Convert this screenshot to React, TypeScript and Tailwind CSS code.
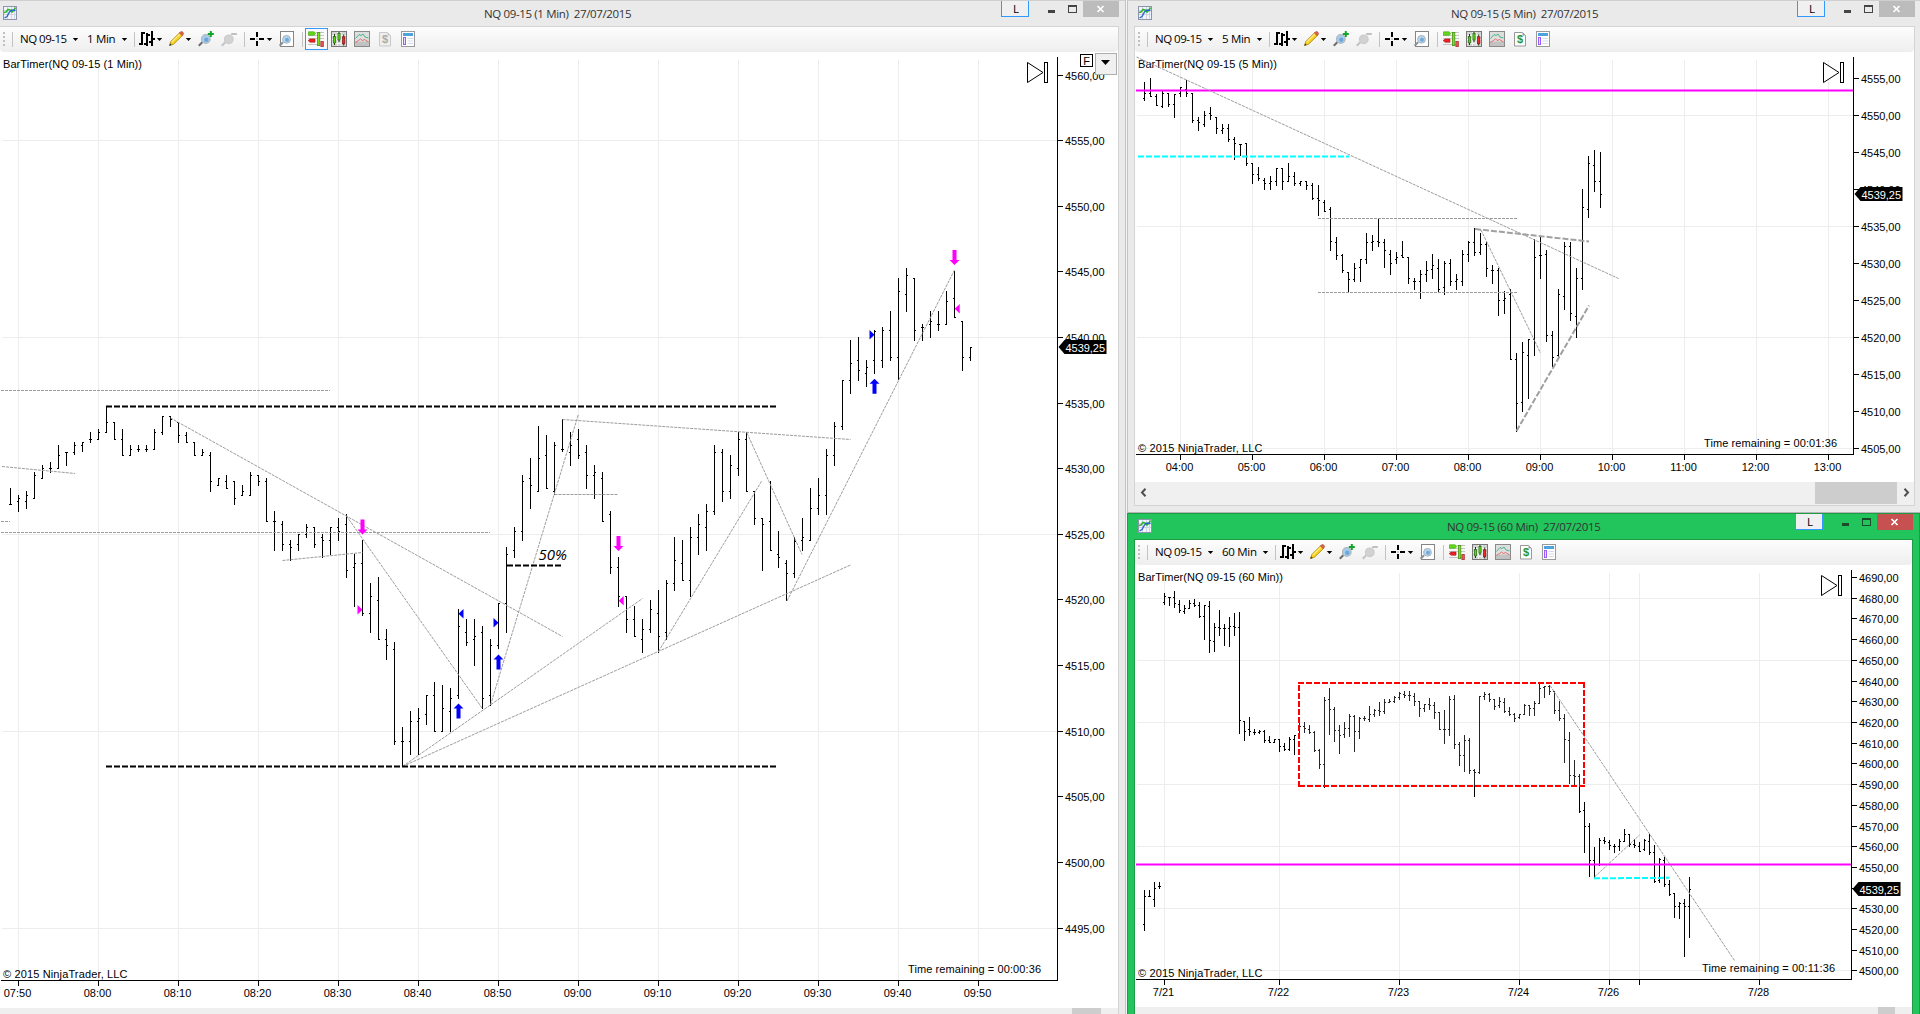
import React from "react";

type Bar = [number, number, number, number];

interface Segment {
  x: number;
  top: number;
  step: number;
  bars: Bar[];
}

/* Bars are [high, low, open, close]; offsets below the segment's top in thirds of a pixel. */
const oneMin: Segment[] = [
  {
    x: 10,
    top: 360,
    step: 8,
    bars: [
      [384, 433, 433, 433], [405, 455, 424, 415], [393, 446, 424, 406], [337, 415, 415, 346],
      [315, 355, 355, 325], [306, 338, 325, 325], [255, 325, 325, 286], [277, 317, 277, 277],
      [246, 286, 277, 256], [247, 277, 256, 247], [216, 248, 238, 238], [207, 238, 238, 217],
      [138, 217, 217, 187], [187, 238, 187, 238], [207, 286, 238, 286], [256, 286, 286, 268],
      [256, 277, 268, 268], [256, 277, 268, 268], [207, 268, 268, 217], [169, 226, 217, 169],
      [169, 200, 169, 178], [187, 248, 187, 226], [216, 248, 226, 247], [247, 286, 247, 286],
      [267, 286, 286, 277], [277, 395, 286, 364], [355, 377, 377, 355], [346, 385, 364, 385],
      [364, 434, 364, 415], [376, 406, 406, 394], [337, 406, 406, 346], [346, 377, 346, 364],
      [355, 484, 364, 484], [453, 572, 484, 484], [484, 572, 493, 553], [541, 602, 553, 562],
      [523, 572, 553, 523], [492, 533, 523, 502], [502, 563, 502, 553], [523, 593, 532, 541],
      [502, 584, 541, 502], [474, 543, 502, 514], [462, 654, 493, 631], [583, 740, 622, 610],
      [541, 769, 610, 760], [669, 818, 760, 709], [652, 838, 721, 838], [807, 900, 838, 856],
      [847, 1154, 868, 1144], [1101, 1222, 1144, 1144], [1053, 1185, 1144, 1084], [1045, 1185, 1084, 1075],
    ],
  },
  {
    x: 426,
    top: 380,
    step: 8,
    bars: [
      [945, 1034, 1003, 945], [906, 1055, 945, 1054], [915, 1055, 1054, 985], [924, 1055, 994, 955],
      [687, 957, 946, 738], [717, 797, 757, 787], [717, 857, 778, 769], [738, 986, 757, 955],
      [777, 977, 946, 796], [670, 808, 796, 670], [501, 759, 670, 523], [441, 533, 512, 454],
      [286, 483, 454, 303], [234, 386, 295, 316], [138, 335, 334, 235], [165, 326, 226, 325],
      [186, 346, 334, 196], [117, 217, 208, 208], [156, 257, 217, 196], [148, 237, 178, 226],
      [196, 326, 217, 286], [255, 356, 286, 277], [277, 425, 295, 424], [393, 581, 403, 562],
      [531, 680, 562, 649], [649, 759, 649, 718], [678, 770, 718, 769], [717, 819, 778, 748],
      [660, 758, 748, 688], [630, 818, 700, 769], [600, 780, 757, 610], [471, 632, 610, 541],
      [480, 602, 550, 601], [441, 652, 601, 472], [402, 524, 472, 433], [372, 513, 442, 394],
      [195, 404, 394, 217], [207, 365, 217, 334], [225, 356, 334, 256], [156, 287, 265, 178],
      [156, 335, 178, 334], [334, 435, 334, 415], [415, 572, 415, 433], [303, 512, 424, 511],
      [453, 563, 523, 532], [541, 662, 550, 580], [471, 594, 580, 484],
    ],
  },
  {
    x: 802,
    top: 240,
    step: 8,
    bars: [
      [834, 934, 901, 892], [744, 902, 901, 805], [714, 824, 805, 766], [627, 824, 766, 646],
      [546, 678, 646, 559], [420, 570, 559, 421], [300, 461, 421, 370], [291, 423, 361, 391],
      [360, 441, 400, 382], [270, 402, 361, 273], [261, 383, 361, 271], [213, 363, 271, 352],
      [114, 420, 352, 154], [84, 216, 163, 106], [114, 302, 115, 271], [252, 303, 262, 262],
      [213, 294, 253, 244], [213, 273, 253, 253], [153, 254, 253, 184], [93, 234, 175, 232],
      [243, 393, 244, 352], [321, 363, 352, 322],
    ],
  },
];

const fiveMin: Segment[] = [
  {
    x: 1144,
    top: 60,
    step: 6,
    bars: [
      [66, 122, 115, 101], [54, 110, 101, 108], [102, 139, 108, 137], [92, 144, 139, 101],
      [101, 140, 101, 133], [102, 174, 133, 102], [80, 110, 100, 83], [60, 110, 89, 100],
      [100, 188, 100, 182], [171, 212, 182, 188], [153, 200, 193, 166], [141, 180, 160, 166],
      [171, 221, 172, 205], [192, 221, 211, 205], [192, 246, 205, 238], [231, 299, 238, 250],
      [252, 289, 253, 253], [250, 318, 250, 310], [309, 371, 310, 343], [321, 364, 343, 355],
      [354, 389, 361, 370], [348, 389, 370, 364], [324, 377, 364, 325], [325, 389, 325, 364],
      [309, 365, 364, 349], [336, 377, 349, 370], [362, 377, 370, 364], [364, 389, 364, 376],
      [370, 420, 376, 415], [375, 467, 415, 421], [420, 455, 427, 454], [441, 572, 448, 544],
      [532, 600, 547, 586], [583, 638, 586, 632], [636, 696, 637, 658], [609, 665, 658, 625],
      [598, 665, 622, 598], [519, 612, 598, 547], [525, 572, 547, 544], [475, 560, 544, 547],
      [537, 624, 547, 571], [571, 644, 583, 610], [576, 611, 598, 592], [543, 594, 586, 592],
      [592, 671, 592, 656], [655, 690, 664, 664], [630, 716, 664, 643], [603, 665, 643, 631],
      [582, 656, 628, 616], [598, 695, 625, 688], [603, 704, 682, 610], [597, 678, 610, 664],
      [642, 690, 664, 658], [570, 678, 664, 583], [543, 606, 583, 547], [505, 587, 547, 577],
      [519, 585, 577, 553], [547, 651, 553, 625], [615, 672, 631, 631], [624, 767, 631, 721],
      [693, 762, 721, 714], [687, 900, 703, 898], [879, 1115, 898, 1030], [846, 1056, 1027, 877],
      [838, 1016, 886, 838], [537, 887, 838, 592], [531, 657, 586, 586], [570, 846, 583, 826],
      [813, 920, 826, 892], [687, 893, 886, 703], [546, 749, 709, 559], [546, 783, 559, 760],
      [624, 833, 769, 655], [387, 689, 655, 442], [288, 474, 448, 310], [270, 396, 316, 364],
      [276, 444, 364, 403],
    ],
  },
];

const sixtyMin: Segment[] = [
  {
    x: 1144,
    top: 500,
    step: 5,
    bars: [
      [1170, 1292, 1273, 1189], [1170, 1190, 1189, 1189], [1146, 1221, 1198, 1164], [1146, 1166, 1158, 1160],
      [279, 315, 307, 289], [291, 318, 291, 291], [272, 324, 291, 310], [300, 339, 312, 331],
      [315, 342, 334, 325], [300, 326, 325, 310], [297, 320, 310, 316], [306, 353, 316, 349],
      [315, 420, 349, 316], [303, 459, 318, 420], [369, 456, 423, 382], [330, 407, 382, 384],
      [372, 438, 384, 384], [350, 441, 384, 379], [339, 407, 379, 382], [336, 702, 382, 661],
      [662, 723, 664, 694], [651, 708, 688, 694], [687, 704, 697, 697], [690, 703, 697, 694],
      [690, 728, 694, 721], [708, 728, 721, 727], [717, 728, 727, 718], [717, 755, 718, 739],
      [730, 752, 739, 748], [711, 753, 748, 718], [705, 764, 718, 706], [669, 706, 706, 679],
      [666, 698, 679, 685], [675, 702, 688, 697], [694, 755, 697, 751], [747, 807, 751, 793],
      [591, 863, 793, 600], [564, 704, 598, 628], [621, 726, 628, 691], [675, 761, 691, 706],
      [666, 714, 703, 685], [642, 711, 685, 649], [645, 756, 649, 694], [651, 716, 694, 655],
      [649, 662, 655, 655], [618, 666, 658, 643], [627, 650, 643, 631], [606, 647, 631, 634],
      [597, 642, 634, 607], [597, 609, 606, 604], [588, 608, 604, 592], [576, 599, 592, 580],
      [574, 594, 583, 586], [573, 602, 586, 586], [579, 617, 588, 604], [603, 651, 604, 625],
      [612, 636, 625, 613], [594, 630, 613, 616], [606, 656, 616, 637], [636, 690, 637, 688],
      [630, 731, 688, 688], [588, 708, 688, 598], [585, 747, 598, 733], [727, 797, 733, 766],
      [705, 815, 766, 721], [714, 822, 721, 811], [807, 890, 811, 818], [588, 822, 818, 589],
      [576, 599, 589, 583], [579, 606, 583, 598], [597, 630, 598, 619], [591, 623, 616, 604],
      [594, 638, 607, 634], [621, 648, 634, 643], [639, 665, 643, 655], [643, 657, 652, 643],
      [612, 645, 643, 616], [615, 648, 616, 625], [603, 647, 625, 610], [549, 612, 610, 565],
      [558, 593, 562, 559], [554, 584, 559, 574], [573, 641, 574, 631], [603, 662, 631, 655],
      [642, 788, 655, 718], [696, 852, 721, 826], [780, 855, 826, 829], [822, 938, 829, 934],
      [906, 1058, 931, 979], [969, 1131, 979, 1081], [1041, 1134, 1081, 1093], [1014, 1098, 1093, 1021],
      [1011, 1031, 1021, 1024], [1020, 1050, 1027, 1036], [1032, 1058, 1039, 1039], [1017, 1053, 1039, 1024],
      [987, 1026, 1024, 1003], [1002, 1041, 1003, 1033], [1018, 1044, 1033, 1036], [1027, 1055, 1039, 1054],
      [1017, 1053, 1048, 1021], [1002, 1065, 1024, 1057], [1036, 1148, 1057, 1144], [1073, 1148, 1141, 1078],
      [1071, 1161, 1081, 1154], [1140, 1188, 1153, 1183], [1179, 1253, 1180, 1220], [1206, 1257, 1219, 1210],
      [1197, 1371, 1210, 1219], [1131, 1314, 1219, 1168],
    ],
  },
];

function barsPath(segments: Segment[]) {
  let d = "";
  for (const s of segments) {
    s.bars.forEach(([h, l, o, c], i) => {
      const x = s.x + i * s.step;
      const oy = Math.floor(o / 3);
      const cy = Math.floor(c / 3);
      const y1 = Math.min(Math.round(h / 3), oy, cy) + s.top;
      const y2 = Math.max(Math.round(l / 3), oy + 1, cy + 1) + s.top;
      d += `M${x} ${y1}h1V${y2}h-1z`;
      d += `M${x - 1} ${oy + s.top}h1v1h-1z`;
      d += `M${x + 1} ${cy + s.top}h1v1h-1z`;
    });
  }
  return d;
}

function OhlcBars({ segments }: { segments: Segment[] }) {
  return <path d={barsPath(segments)} fill="#000" shapeRendering="crispEdges" />;
}

const arial = "'Liberation Sans', Arial, sans-serif";
const segoe = "'Open Sans', 'Noto Sans', sans-serif";

interface FrameProps {
  left: number;
  axisX: number;
  top: number;
  axisY: number;
  prices: { label: string; y: number; grid: boolean }[];
  times: { label: string; x: number }[];
  timeBase: number;
  title: string;
  titleWidth: number;
  copyrightBase: number;
}

function Frame(p: FrameProps) {
  return (
    <>
      <g fill="#ededed" shapeRendering="crispEdges">
        {p.times.map((t) => (
          <rect key={t.x} x={t.x} y={p.top + 3} width={1} height={p.axisY - p.top - 3} />
        ))}
        {p.prices
          .filter((q) => q.grid)
          .map((q) => (
            <rect key={q.y} x={p.left + 1} y={q.y} width={p.axisX - p.left - 1} height={1} />
          ))}
      </g>
      <g fill="#000" shapeRendering="crispEdges">
        <rect x={p.axisX} y={p.top} width={1} height={p.axisY - p.top + 1} />
        <rect x={p.left} y={p.axisY} width={p.axisX - p.left} height={1} />
        {p.times.map((t) => (
          <rect key={t.x} x={t.x} y={p.axisY + 1} width={1} height={5} />
        ))}
        {p.prices.map((q) => (
          <rect key={q.y} x={p.axisX + 1} y={q.y} width={5} height={1} />
        ))}
      </g>
      <g fontFamily={arial} fontSize={11} fill="#000">
        {p.times.map((t) => (
          <text key={t.x} x={t.x - 0.5} y={p.timeBase} textAnchor="middle">
            {t.label}
          </text>
        ))}
        {p.prices.map((q) => (
          <text key={q.y} x={p.axisX + 8} y={q.y + 4.5} textLength={39.5}>
            {q.label}
          </text>
        ))}
        <text x={p.left + 2} y={p.top + 11} textLength={p.titleWidth}>
          {p.title}
        </text>
        <text x={p.left + 2} y={p.copyrightBase} textLength={124.5}>
          © 2015 NinjaTrader, LLC
        </text>
      </g>
      <g fill="#fff" stroke="#000">
        <path d={`M${p.axisX - 29.5} ${p.top + 5.5}v20l15.5-10z`} />
        <rect x={p.axisX - 12.5} y={p.top + 5.5} width={3} height={20} />
      </g>
    </>
  );
}

function Remaining({ x, y, value }: { x: number; y: number; value: string }) {
  return (
    <text x={x} y={y} textLength={133} fontFamily={arial} fontSize={11}>
      Time remaining = {value}
    </text>
  );
}

function LastPrice({ x, y }: { x: number; y: number }) {
  return (
    <g>
      <path d={`M${x + 1.5} ${y}l6-7h42v14h-42z`} fill="#000" />
      <text x={x + 8.5} y={y + 4.5} fill="#fff" fontFamily={arial} fontSize={11} textLength={39.5}>
        4539,25
      </text>
    </g>
  );
}

type Line = [number, number, number, number];

function ThinLines({ lines }: { lines: Line[] }) {
  return (
    <g stroke="#9c9c9c" strokeWidth={1} strokeDasharray="3 1">
      {lines.map(([x1, y1, x2, y2], i) => (
        <line key={i} x1={x1} y1={y1} x2={x2} y2={y2} />
      ))}
    </g>
  );
}

function ThickLines({ lines, color }: { lines: Line[]; color: string }) {
  return (
    <g stroke={color} strokeWidth={2} strokeDasharray="6 2">
      {lines.map(([x1, y1, x2, y2], i) => (
        <line key={i} x1={x1} y1={y1} x2={x2} y2={y2} />
      ))}
    </g>
  );
}

const range = (n: number) => Array.from({ length: n }, (_, i) => i);
const price = (n: number) => `${n},00`;

function OneMinuteChart() {
  const down = (x: number, y: number) => `M${x - 2} ${y}h4v10h3l-5 5l-5-5h3z`;
  const up = (x: number, y: number) => `M${x - 2} ${y + 15}h4v-10h3l-5-5l-5 5h3z`;
  return (
    <svg className="block shrink-0" width={1118} height={956} viewBox="0 52 1118 956">
      <Frame
        left={1}
        axisX={1057}
        top={57}
        axisY={980}
        prices={range(14).map((i) => ({
          label: price(4560 - i * 5),
          y: Math.floor(75 + 65.62 * i),
          grid: i % 3 === 1,
        }))}
        times={range(13).map((i) => {
          const m = 470 + i * 10;
          return {
            x: 18 + 80 * i,
            label: `${String(Math.floor(m / 60)).padStart(2, "0")}:${String(m % 60).padStart(2, "0")}`,
          };
        })}
        timeBase={997}
        title="BarTimer(NQ 09-15 (1 Min))"
        titleWidth={139}
        copyrightBase={978}
      />
      <OhlcBars segments={oneMin} />
      <ThinLines
        lines={[
          [1, 390.5, 330, 390.5],
          [1, 532.5, 490, 532.5],
          [1, 521.5, 10, 521.5],
          [2, 466.5, 75, 473.5],
          [170.5, 418, 562.5, 636.5],
          [346.5, 516, 482, 708],
          [282.5, 560.5, 362.5, 552.5],
          [490.5, 705, 578.5, 414],
          [402.5, 766.5, 642.5, 598.5],
          [402.5, 766.5, 850.5, 565],
          [554.5, 494.5, 618, 494.5],
          [562.5, 419.5, 850.5, 439.5],
          [658.5, 651.5, 762, 480.5],
          [747, 433, 802, 554.5],
          [787, 601, 954.5, 270],
        ]}
      />
      <ThickLines
        color="#000"
        lines={[
          [106, 406.5, 777, 406.5],
          [106, 766.5, 777, 766.5],
          [507, 565.5, 561, 565.5],
        ]}
      />
      <text x={538.5} y={559.5} fontFamily={segoe} fontStyle="italic" fontSize={15}>
        50%
      </text>
      <path d={down(362.5, 519.5) + down(618.5, 536) + down(954.5, 250)} fill="#f0f" />
      <path d={up(458.5, 703.5) + up(498.5, 654.5) + up(874.5, 378.7)} fill="#00f" />
      <path
        d="M357.5 605l5 4.7l-5 4.7z M623.7 596l-5 4.7l5 4.7z M959.7 304l-5 4.7l5 4.7z"
        fill="#f0f"
      />
      <path
        d="M463.5 609l-5 4.7l5 4.7z M493.5 618l5 4.7l-5 4.7z M869.5 330l5 4.7l-5 4.7z"
        fill="#00f"
      />
      <Remaining x={908} y={973} value="00:00:36" />
      <LastPrice x={1057} y={347} />
      <rect x={1080.5} y={54.5} width={12} height={12} fill="#fff" stroke="#000" />
      <text x={1083.3} y={64.5} fontFamily={arial} fontSize={11}>
        F
      </text>
      <rect x={1095.5} y={53.5} width={21} height={21} fill="#f0f0f0" stroke="#adadad" />
      <path d="M1101 60h9l-4.5 5z" fill="#000" />
    </svg>
  );
}

function FiveMinuteChart() {
  return (
    <svg className="block shrink-0" width={779} height={430} viewBox="1135 52 779 430">
      <Frame
        left={1136}
        axisX={1853}
        top={57}
        axisY={454}
        prices={range(11).map((i) => ({ label: price(4555 - i * 5), y: 78 + 37 * i, grid: i % 3 === 1 }))}
        times={range(10).map((i) => ({ x: 1180 + 72 * i, label: `${String(4 + i).padStart(2, "0")}:00` }))}
        timeBase={470.5}
        title="BarTimer(NQ 09-15 (5 Min))"
        titleWidth={139}
        copyrightBase={451.5}
      />
      <OhlcBars segments={fiveMin} />
      <line x1={1136} x2={1853} y1={90.5} y2={90.5} stroke="#f0f" strokeWidth={2} />
      <ThickLines color="#0ff" lines={[[1138, 156.5, 1349, 156.5]]} />
      <ThinLines
        lines={[
          [1136.5, 57, 1618.5, 278.5],
          [1318, 218.5, 1517, 218.5],
          [1318, 292.5, 1517, 292.5],
          [1481, 230, 1540.5, 353],
        ]}
      />
      <ThickLines
        color="#a0a0a0"
        lines={[
          [1475, 229, 1589, 241.5],
          [1516.5, 431, 1589, 305.5],
        ]}
      />
      <Remaining x={1704} y={446.5} value="00:01:36" />
      <LastPrice x={1853} y={194} />
    </svg>
  );
}

function SixtyMinuteChart() {
  const xs = [1164, 1279, 1399, 1519, 1609, 1639, 1759];
  const labels = ["7/21", "7/22", "7/23", "7/24", "7/26", "", "7/28"];
  return (
    <svg className="block shrink-0" width={777} height={442} viewBox="1135 565 777 442">
      <Frame
        left={1136}
        axisX={1851}
        top={570}
        axisY={979}
        prices={range(20).map((i) => ({
          label: price(4690 - i * 10),
          y: Math.floor(577.5 + 20.71 * i),
          grid: i % 3 === 1,
        }))}
        times={xs.map((x, i) => ({ x, label: labels[i] }))}
        timeBase={996}
        title="BarTimer(NQ 09-15 (60 Min))"
        titleWidth={145}
        copyrightBase={977}
      />
      <OhlcBars segments={sixtyMin} />
      <line x1={1136} x2={1851} y1={864.5} y2={864.5} stroke="#f0f" strokeWidth={2} />
      <ThickLines color="#0ff" lines={[[1594, 878.3, 1669.5, 877.8]]} />
      <rect x={1299} y={683} width={285} height={103} fill="#fff" fillOpacity={0.15} />
      <ThickLines
        color="#f00"
        lines={[
          [1298, 683, 1585, 683],
          [1584, 682, 1584, 787],
          [1585, 786, 1298, 786],
          [1299, 787, 1299, 682],
        ]}
      />
      <ThinLines
        lines={[
          [1550, 685.5, 1734.5, 960.5],
          [1594.5, 877, 1639.5, 835],
        ]}
      />
      <Remaining x={1702} y={972} value="00:11:36" />
      <LastPrice x={1851} y={889} />
    </svg>
  );
}

/* ---------- toolbar icons ---------- */

function AppIcon() {
  return (
    <svg className="block" width={14} height={14} viewBox="0 0 14 14">
      <rect x={0.5} y={0.5} width={13} height={13} fill="#f2f6fc" stroke="#8f94ad" />
      <path d="M1 4.5h12M1 8.5h12M4.5 1v12M8.5 1v12M11.5 1v12" stroke="#cdd4e6" />
      <path d="M1 6.5l2-.5 2-2.5 2 .5 2 2 2-2 1.5-2.5" fill="none" stroke="#2eb82e" strokeWidth={1.6} />
      <path d="M1.5 12l2.5-1.5L6.5 6 9 4l3.5.5" fill="none" stroke="#2d62c8" strokeWidth={1.4} />
    </svg>
  );
}

function Caret({ className = "" }: { className?: string }) {
  return (
    <svg className={`block shrink-0 ${className}`} width={7} height={16} viewBox="0 0 7 16">
      <path d="M.8 7h5.4L3.5 10z" fill="#000" />
    </svg>
  );
}

function Separator({ className }: { className: string }) {
  return <div className={`h-[15px] w-px shrink-0 bg-[#c3c3c3] ${className}`} />;
}

function BarStyleIcon() {
  return (
    <svg className="ml-1 block shrink-0" width={16} height={16} viewBox="0 0 16 16">
      <path
        d="M0 12h2v2H0z M2 1h2v13H2z M4 1h2v2H4z M7 2h2v13H7z M5 12h2v2H5z M9 3h2v2H9z M12 0h2v15h-2z M10 10h2v2h-2z M14 7h2v2h-2z"
        fill="#000"
        shapeRendering="crispEdges"
      />
    </svg>
  );
}

function PencilIcon() {
  return (
    <svg className="ml-1.5 block shrink-0" width={16} height={16} viewBox="0 0 16 16">
      <path d="M.5 14.5l1.3-4L10.6 1.700l2.900 2.900-9 8.600z" fill="#f8d01e" stroke="#a98412" strokeWidth={0.8} />
      <path d="M2.800 11.200l8-8" stroke="#fff08a" strokeWidth={1.200} />
      <path d="M10.400 2l1.200-1.200q1.500-.6 2.400.5t.3 2.200l-1.200 1.200z" fill="#e2604e" stroke="#a84b3c" strokeWidth={0.6} />
      <path d="M.3 14.800l.8-2.400 1.600 1.600z" fill="#333" />
    </svg>
  );
}

function ZoomIcon({ plus }: { plus: boolean }) {
  return plus ? (
    <svg className="ml-1.5 block shrink-0" width={16} height={16} viewBox="0 0 16 16">
      <path d="M.8 14.800L4.500 11" stroke="#6e6e6e" strokeWidth={2} />
      <circle cx={7.800} cy={8} r={4.300} fill="#a5cdec" stroke="#b0b8bf" strokeWidth={1.200} />
      <circle cx={8.300} cy={8.800} r={2.200} fill="#6da6da" />
      <path d="M12.800 0v6M9.800 3h6" stroke="#12a52c" strokeWidth={2} />
    </svg>
  ) : (
    <svg className="ml-[7px] block shrink-0" width={16} height={16} viewBox="0 0 16 16">
      <path d="M.8 14.800L4.500 11" stroke="#c4c4c4" strokeWidth={2} />
      <circle cx={7.800} cy={8.300} r={4.300} fill="#d2d2d2" stroke="#cbcbcb" strokeWidth={1.200} />
      <path d="M10.200 3h5.600" stroke="#b9b9b9" strokeWidth={1.800} />
    </svg>
  );
}

function CrosshairIcon() {
  return (
    <svg className="ml-[5px] block shrink-0" width={15} height={16} viewBox="0 0 15 16">
      <path d="M6 1h2v5h-2zM6 10h2v5h-2zM0 7h5v2h-5zM9 7h5v2h-5z" fill="#000" shapeRendering="crispEdges" />
      <rect x={6.500} y={7.500} width={1} height={1} fill="#555" />
    </svg>
  );
}

function DataBoxIcon() {
  return (
    <svg className="ml-1.5 block shrink-0" width={16} height={16} viewBox="0 0 16 16">
      <rect x={1.500} y={0.500} width={13} height={15} fill="#fff" stroke="#858585" />
      <path d="M.6 14.800L4 11.300" stroke="#8a8f94" strokeWidth={2} />
      <circle cx={7.500} cy={8.300} r={3.900} fill="#b5d6f0" stroke="#a9b3bb" />
      <circle cx={8} cy={8.800} r={2} fill="#6fa8dc" />
    </svg>
  );
}

function TraderIcon({ active }: { active: boolean }) {
  return (
    <div
      className={`ml-0.5 flex h-[22px] w-[23px] shrink-0 items-center border pl-[2px] ${
        active ? "border-[#3399ff] bg-[#fafafa]" : "border-transparent"
      }`}
    >
      <svg className="block" width={16} height={16} viewBox="0 0 16 16">
        <path d="M0 4.500h16M0 7.500h16M0 13.500h16M8 1.500h8" stroke="#c4c4c4" />
        <path d="M.5.8h5.500l1.800 1.700-1.800 1.700h-5.500z" fill="#62dc12" stroke="#3f9a12" strokeWidth={0.6} />
        <path d="M7 8h-5l-1.800 1.600 1.800 1.600h5z" fill="#ee2222" stroke="#a31515" strokeWidth={0.6} />
        <rect x={9.400} y={1.400} width={2.400} height={13.200} fill="#7be01a" stroke="#47941a" strokeWidth={0.8} />
        <rect x={12.900} y={10.400} width={2.400} height={5.200} fill="#ee5a5a" stroke="#a33" strokeWidth={0.8} />
      </svg>
    </div>
  );
}

function IndicatorIcon() {
  return (
    <svg className="ml-[3px] block shrink-0" width={16} height={16} viewBox="0 0 16 16">
      <rect x={0.500} y={0.500} width={15} height={15} fill="#d4d4d4" stroke="#777" />
      <path d="M1 4.500h14M1 8.500h14M1 12.500h14M6.500 1v14M10 1v14" stroke="#f3f3f3" />
      <path d="M3.500 3v11M8 1v10M12.700 3.500v11" stroke="#1c3a12" strokeWidth={1} />
      <rect x={2.400} y={5.500} width={2.200} height={6.500} fill="#59d618" stroke="#276a12" strokeWidth={0.700} />
      <rect x={6.900} y={2.500} width={2.200} height={6.500} fill="#59d618" stroke="#276a12" strokeWidth={0.700} />
      <rect x={11.500} y={5.800} width={2.400} height={7} fill="#ee2828" stroke="#7d1717" strokeWidth={0.700} />
    </svg>
  );
}

function StrategyIcon() {
  return (
    <svg className="ml-[7px] block shrink-0" width={16} height={16} viewBox="0 0 16 16">
      <rect x={0.500} y={0.500} width={15} height={15} fill="#dedede" stroke="#8a8a8a" />
      <path d="M1 10.500h14v4.500h-14z" fill="#c2c2c2" />
      <path d="M1.500 7.500L5 3.500l2 1 2-1.500 2 3 3.500 1" fill="none" stroke="#49b78a" />
      <path d="M1.500 11.500l3-2 2-1.500 2 1.500 2-1 4 2.500" fill="none" stroke="#e56a6a" />
    </svg>
  );
}

function AccountIcon({ active }: { active: boolean }) {
  return (
    <svg className="ml-[7px] block shrink-0" width={16} height={16} viewBox="0 0 16 16">
      <path
        d="M2.500 1.500h8l3 3v10.500h-11z"
        fill={active ? "#fff" : "#eee"}
        stroke={active ? "#999" : "#c9c9c9"}
      />
      <path d="M10.500 1.500v3h3z" fill={active ? "#999" : "#c9c9c9"} />
      <text
        x={8}
        y={12.300}
        textAnchor="middle"
        fontFamily={arial}
        fontWeight="bold"
        fontSize={11}
        fill={active ? "#2d9428" : "#ababab"}
      >
        $
      </text>
    </svg>
  );
}

function PropertiesIcon() {
  return (
    <svg className="ml-[7px] block shrink-0" width={16} height={16} viewBox="0 0 16 16">
      <rect x={1.500} y={0.500} width={13} height={15} fill="#fff" stroke="#9a9a9a" />
      <rect x={3} y={2} width={10} height={3} fill="#4fa3dc" />
      <rect x={3.500} y={6.500} width={2} height={7} fill="#e9dcff" stroke="#9b5cff" />
      <path d="M7.500 7.500h5.500M7.500 10h5.500M7.500 12.500h5.500" stroke="#d5dbe6" />
    </svg>
  );
}

function Toolbar({ interval, wide = false, first = false }: { interval: string; wide?: boolean; first?: boolean }) {
  return (
    <div className="flex h-[25px] w-full shrink-0 items-center rounded-bl-sm rounded-br-sm bg-linear-to-b from-[#fdfdfd] to-[#eeeeee] pb-px font-['Open_Sans','Noto_Sans',sans-serif] text-[11.5px] leading-4 text-black">
      <div className="ml-[3px] flex shrink-0 flex-col gap-[2px]">
        {range(4).map((i) => (
          <div key={i} className="size-[2px] bg-[#c0c0c0]" />
        ))}
      </div>
      <Separator className="ml-[7px]" />
      <span className="ml-[7px] w-[52px] shrink-0 tracking-[-0.5px] whitespace-nowrap">NQ 09-15</span>
      <Caret />
      <span
        className={`ml-2 shrink-0 tracking-[-0.3px] whitespace-nowrap ${wide ? "w-[40px]" : "w-[34px]"}`}
      >
        {interval}
      </span>
      <Caret />
      <Separator className="ml-1.5" />
      <BarStyleIcon />
      <Caret className="ml-px" />
      <PencilIcon />
      <Caret />
      <ZoomIcon plus />
      <ZoomIcon plus={false} />
      <Separator className="ml-[7px]" />
      <CrosshairIcon />
      <Caret className="ml-px" />
      <DataBoxIcon />
      <Separator className="ml-[7px]" />
      <TraderIcon active={first} />
      <IndicatorIcon />
      <StrategyIcon />
      <AccountIcon active={!first} />
      <PropertiesIcon />
    </div>
  );
}

function WindowButtons({ active = false }: { active?: boolean }) {
  const ink = active ? "#1d4a2b" : "#444";
  return (
    <div className="ml-auto flex h-4 shrink-0">
      <div className="flex h-4 w-7 items-center justify-center border border-t-0 border-[#3399ff] bg-[#f0f0f0] pl-0.5 font-['Open_Sans','Noto_Sans',sans-serif] text-[11.5px] leading-none text-black">
        L
      </div>
      <svg className="ml-[19px] block" width={35} height={16} viewBox="0 0 35 16">
        <rect x={0} y={9} width={7} height={3} fill={ink} />
        <path d="M20 4h9v8h-9z M21 6v5h7v-5z" fill={ink} fillRule="evenodd" />
      </svg>
      <svg
        className={`block ${active ? "bg-[#c75050]" : "bg-[#bcbcbc]"}`}
        width={36}
        height={16}
        viewBox="0 0 36 16"
      >
        <path d="M14.500 5l6 6M20.500 5l-6 6" stroke="#fff" strokeWidth={1.700} />
      </svg>
    </div>
  );
}

function Title({ children, className }: { children: string; className: string }) {
  return (
    <span
      className={`mt-[5px] shrink-0 whitespace-pre font-['Open_Sans','Noto_Sans',sans-serif] text-[11.5px] leading-4 tracking-[-0.36px] text-[#333] ${className}`}
    >
      {children}
    </span>
  );
}

export default function App() {
  return (
    <div className="flex h-[1014px] w-[1920px] overflow-hidden bg-[#eaeaea]">
      <section className="flex h-full w-[1126px] shrink-0 flex-col border-t border-r border-t-[#cfcfcf] border-r-[#c4c4c4] bg-[#eaeaea]">
        <header className="flex h-[25px] shrink-0 items-start pr-1.5">
          <div className="mt-[5px] ml-[3px]">
            <AppIcon />
          </div>
          <Title className="ml-[467px]">NQ 09-15 (1 Min)  27/07/2015</Title>
          <WindowButtons />
        </header>
        <div className="flex w-[1119px] grow flex-col border-t border-r border-[#d4d4d4] bg-white">
          <Toolbar interval="1 Min" first />
          <OneMinuteChart />
          <div className="flex h-1.5 shrink-0 bg-[#efefef]">
            <div className="ml-[1072px] h-full w-[29px] bg-[#cdcdcd]" />
          </div>
        </div>
      </section>
      <div className="w-px shrink-0 bg-[#f4f4f4]" />
      <div className="flex w-[793px] shrink-0 flex-col">
        <section className="flex h-[513px] shrink-0 flex-col border-t border-b border-l border-t-[#cfcfcf] border-b-[#b5b5b5] border-l-[#c4c4c4] bg-[#eaeaea]">
          <header className="flex h-[25px] shrink-0 items-start pr-[5px]">
            <div className="mt-[5px] ml-[10px]">
              <AppIcon />
            </div>
            <Title className="ml-[299px]">NQ 09-15 (5 Min)  27/07/2015</Title>
            <WindowButtons />
          </header>
          <div className="ml-1.5 flex w-[781px] flex-col border border-[#d4d4d4] bg-white">
            <Toolbar interval="5 Min" />
            <FiveMinuteChart />
            <div className="flex h-[23px] shrink-0 items-center bg-[#f0f0f0]">
              <svg className="mb-0.5 ml-[5px] block" width={7} height={9} viewBox="0 0 7 9">
                <path d="M5.500.8L2 4.500l3.500 3.700" fill="none" stroke="#505050" strokeWidth={2} />
              </svg>
              <div className="ml-auto h-[22px] w-[82px] self-start bg-[#cdcdcd]" />
              <svg className="mr-1 mb-0.5 ml-1.5 block" width={7} height={9} viewBox="0 0 7 9">
                <path d="M1.500.8L5 4.500 1.500 8.200" fill="none" stroke="#505050" strokeWidth={2} />
              </svg>
            </div>
          </div>
        </section>
        <section className="flex h-[501px] shrink-0 flex-col border-t border-r border-l border-[#1b9c45] bg-[#22c55b]">
          <header className="flex h-[25px] shrink-0 items-start pr-1.5">
            <div className="mt-[5px] ml-[10px]">
              <AppIcon />
            </div>
            <Title className="ml-[295px]">NQ 09-15 (60 Min)  27/07/2015</Title>
            <WindowButtons active />
          </header>
          <div className="ml-1.5 flex w-[779px] grow flex-col border-t border-r border-l border-[#1b9c45] bg-white">
            <Toolbar interval="60 Min" wide />
            <SixtyMinuteChart />
            <div className="flex h-[7px] shrink-0 bg-[#efefef]">
              <div className="ml-[743px] h-full w-[17px] bg-[#cdcdcd]" />
            </div>
          </div>
        </section>
      </div>
    </div>
  );
}
